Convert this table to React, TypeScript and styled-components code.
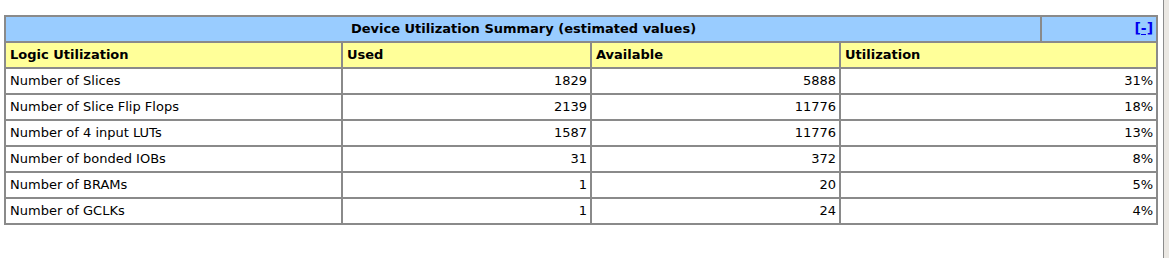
import React from 'react';
import styled, { createGlobalStyle } from 'styled-components';

const GlobalStyle = createGlobalStyle`
  html, body {
    margin: 0;
    padding: 0;
    background: #ffffff;
  }
  body {
    font-family: "DejaVu Sans", Verdana, sans-serif;
    font-size: 13px;
    color: #000000;
  }
`

const Page = styled.div`
  display: flex;
  width: 1169px;
  height: 258px;
  overflow: hidden;
`

const Main = styled.div`
  flex: 1;
  padding: 15px 5px 0 4px;
`

const FrameEdge = styled.div`
  width: 5px;
  border-left: 1px solid #8c8c8c;
  background: #ebe8e3;
`

const Table = styled.table`
  width: 1154px;
  table-layout: fixed;
  border-collapse: separate;
  border-spacing: 0;
  border: 1px solid #8a8a8a;
`

const Cell = styled.td<{ $align?: 'left' | 'right' | 'center' }>`
  height: 24px;
  padding: 0 3px 0 4px;
  border: 1px solid #8a8a8a;
  text-align: ${p => p.$align || 'left'};
  white-space: nowrap;
  overflow: hidden;
  line-height: 24px;
`

const TitleCell = styled(Cell)`
  background: #99ccff;
  font-weight: bold;
`

const HeadCell = styled(Cell)`
  background: #ffff99;
  font-weight: bold;
`

const Toggle = styled.a`
  color: #0000ee;
  font-size: 14px;
  line-height: 1;
  font-weight: bold;
  text-decoration: underline;
  cursor: pointer;
`

const rows = [
  { name: 'Number of Slices', used: 1829, avail: 5888, util: '31%' },
  { name: 'Number of Slice Flip Flops', used: 2139, avail: 11776, util: '18%' },
  { name: 'Number of 4 input LUTs', used: 1587, avail: 11776, util: '13%' },
  { name: 'Number of bonded IOBs', used: 31, avail: 372, util: '8%' },
  { name: 'Number of BRAMs', used: 1, avail: 20, util: '5%' },
  { name: 'Number of GCLKs', used: 1, avail: 24, util: '4%' },
]

function App() {
  return (
    <Page>
      <GlobalStyle />
      <Main>
        <Table>
          <colgroup>
            <col style={{ width: 337 }} />
            <col style={{ width: 249 }} />
            <col style={{ width: 249 }} />
            <col style={{ width: 201 }} />
            <col style={{ width: 116 }} />
          </colgroup>
          <tbody>
            <tr>
              <TitleCell colSpan={4} $align="center">Device Utilization Summary (estimated values)</TitleCell>
              <TitleCell $align="right"><Toggle>[-]</Toggle></TitleCell>
            </tr>
            <tr>
              <HeadCell>Logic Utilization</HeadCell>
              <HeadCell>Used</HeadCell>
              <HeadCell>Available</HeadCell>
              <HeadCell colSpan={2}>Utilization</HeadCell>
            </tr>
            {rows.map(r => (
              <tr key={r.name}>
                <Cell>{r.name}</Cell>
                <Cell $align="right">{r.used}</Cell>
                <Cell $align="right">{r.avail}</Cell>
                <Cell colSpan={2} $align="right">{r.util}</Cell>
              </tr>
            ))}
          </tbody>
        </Table>
      </Main>
      <FrameEdge />
    </Page>
  );
}

export default App;
